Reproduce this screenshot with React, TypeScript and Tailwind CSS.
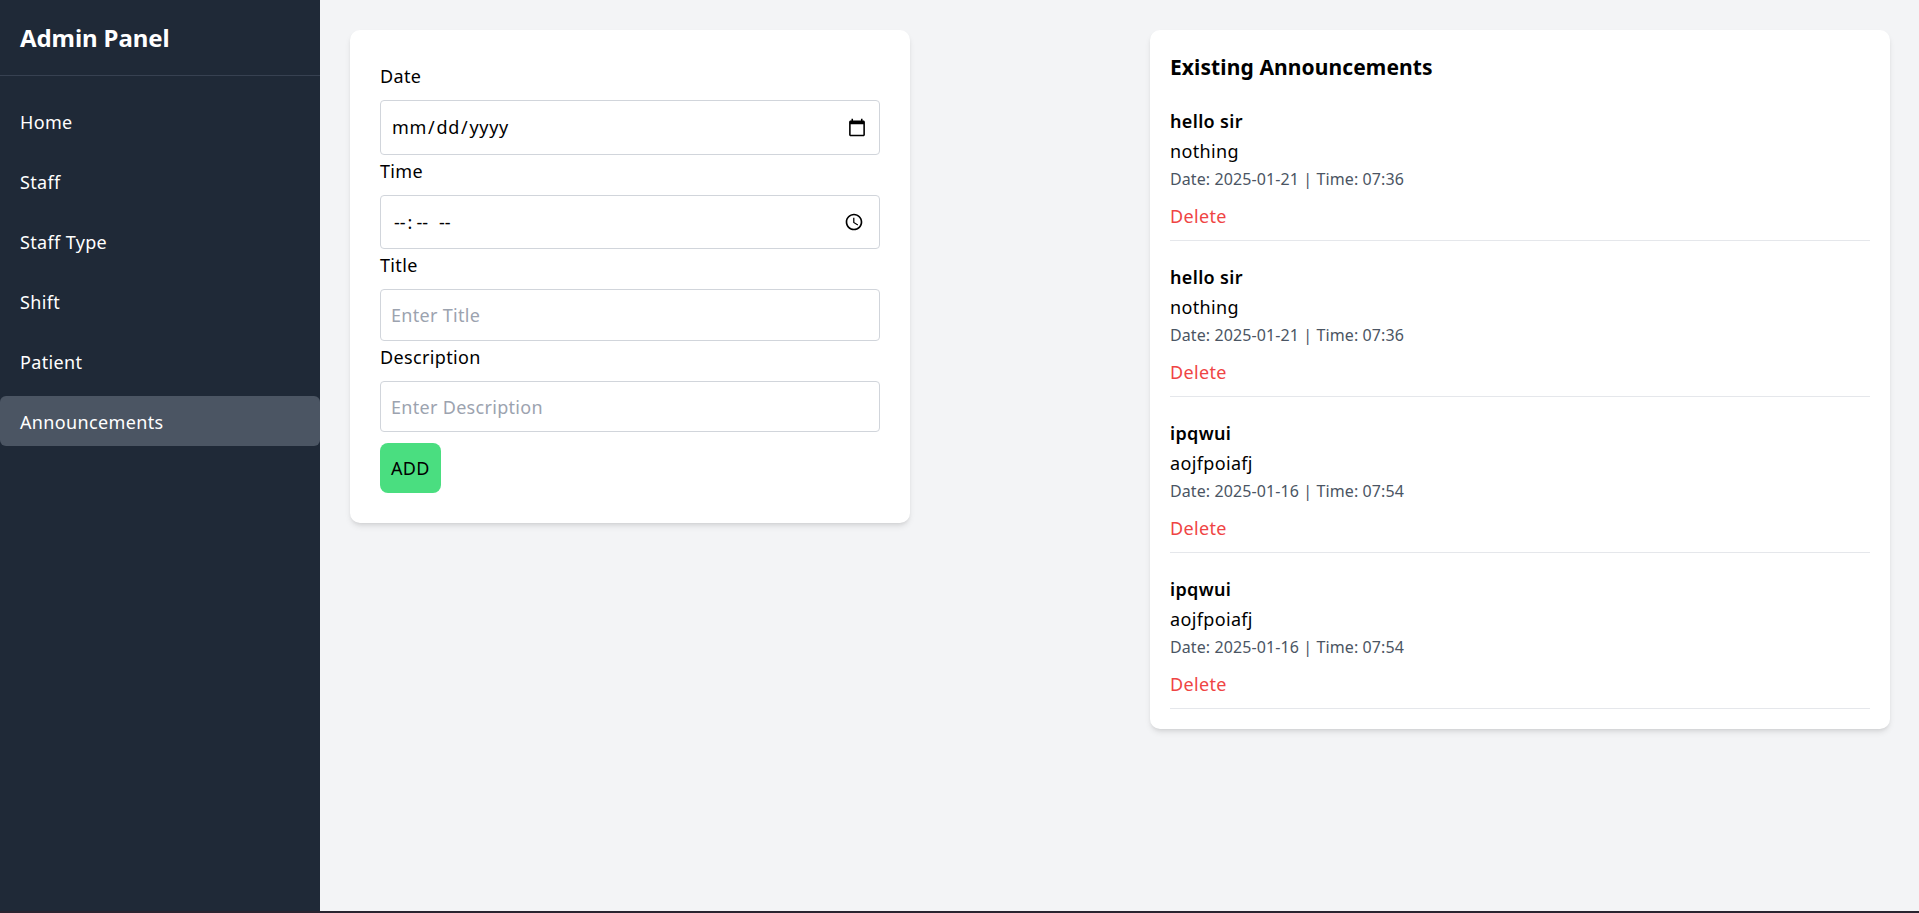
const navItems = ["Home", "Staff", "Staff Type", "Shift", "Patient", "Announcements"]

const announcements = [
  { title: "hello sir", body: "nothing", date: "2025-01-21", time: "07:36" },
  { title: "hello sir", body: "nothing", date: "2025-01-21", time: "07:36" },
  { title: "ipqwui", body: "aojfpoiafj", date: "2025-01-16", time: "07:54" },
  { title: "ipqwui", body: "aojfpoiafj", date: "2025-01-16", time: "07:54" },
]

const labelClass = "block h-[30px] text-[18px] leading-[32px] tracking-[0.35px] mb-[10px] text-black"
const inputClass =
  "block w-full border border-[#d1d5db] rounded-[4px] px-[10px] text-[18px] text-black bg-white placeholder:text-[#9ca3af] outline-none"
const pickerClass = "[&::-webkit-calendar-picker-indicator]:w-[20px] [&::-webkit-calendar-picker-indicator]:h-[20px]"
// the empty time fields come out narrower than the reference's, so spread them by hand
const timeFieldClass =
  "[&::-webkit-calendar-picker-indicator]:mr-[2px] [&::-webkit-datetime-edit-hour-field]:pl-[3px] [&::-webkit-datetime-edit-hour-field]:pr-[2px] [&::-webkit-datetime-edit-minute-field]:pl-[4px] [&::-webkit-datetime-edit-minute-field]:pr-[2px] [&::-webkit-datetime-edit-ampm-field]:pl-[6px]"

export default function App() {
  return (
    <div className="h-[913px] bg-[#2a2430] font-['Noto_Sans',sans-serif] overflow-hidden">
      <div className="flex h-[911px] bg-[#f3f4f6]">
        <aside className="w-80 shrink-0 bg-[#1f2937] text-white">
          <div className="h-[76px] border-b border-[#374151] pl-5 pt-5">
            <h1 className="text-[24px] leading-[36px] font-bold tracking-[-0.1px]">Admin Panel</h1>
          </div>
          <nav className="flex flex-col gap-[10px] pt-[20px]">
            {navItems.map((item) => (
              <a
                key={item}
                href="#"
                className={`h-[50px] flex items-center pl-5 pt-[2px] rounded-md text-[18px] tracking-[0.35px] ${
                  item === "Announcements" ? "bg-[#4b5563]" : ""
                }`}
              >
                {item}
              </a>
            ))}
          </nav>
        </aside>

        <main className="flex-1 flex items-start justify-between pt-[30px] pl-[30px] pr-[29px]">
          <div className="w-[560px] bg-white rounded-[10px] shadow-md p-[30px]">
            <form>
              <label className={labelClass}>Date</label>
              <input type="date" className={`${inputClass} ${pickerClass} tracking-[0.7px] h-[55px]`} />
              <label className={labelClass}>Time</label>
              <input type="time" className={`${inputClass} ${pickerClass} ${timeFieldClass} h-[54px]`} />
              <label className={labelClass}>Title</label>
              <input
                type="text"
                placeholder="Enter Title"
                className={`${inputClass} tracking-[0.3px] h-[52px]`}
              />
              <label className={labelClass}>Description</label>
              <input
                type="text"
                placeholder="Enter Description"
                className={`${inputClass} tracking-[0.3px] h-[51px]`}
              />
              <button
                type="button"
                className="block mt-[11px] h-[50px] px-[11px] bg-[#4ade80] rounded-lg text-[18px] tracking-[0.35px] text-black"
              >
                ADD
              </button>
            </form>
          </div>

          <div className="w-[740px] bg-white rounded-[10px] shadow-md p-5">
            <h2 className="h-[36px] text-[21px] leading-[34px] font-bold tracking-[0.1px] text-black">
              Existing Announcements
            </h2>
            <ul>
              {announcements.map((a, i) => (
                <li key={i} className={`border-b border-[#e5e7eb] pb-[9px] ${i === 0 ? "mt-5" : "mt-[21px]"}`}>
                  <h3 className="text-[18px] leading-[30px] font-semibold tracking-[0.35px] text-black">{a.title}</h3>
                  <p className="text-[18px] leading-[30px] tracking-[0.35px] text-black">{a.body}</p>
                  <p className="text-[16px] leading-[26px] tracking-[0.1px] text-[#4b5563]">
                    Date: {a.date} | Time: {a.time}
                  </p>
                  <button
                    type="button"
                    className="block mt-[9px] text-[18px] leading-[30px] tracking-[0.35px] text-[#ef4444]"
                  >
                    Delete
                  </button>
                </li>
              ))}
            </ul>
          </div>
        </main>
      </div>
    </div>
  )
}
